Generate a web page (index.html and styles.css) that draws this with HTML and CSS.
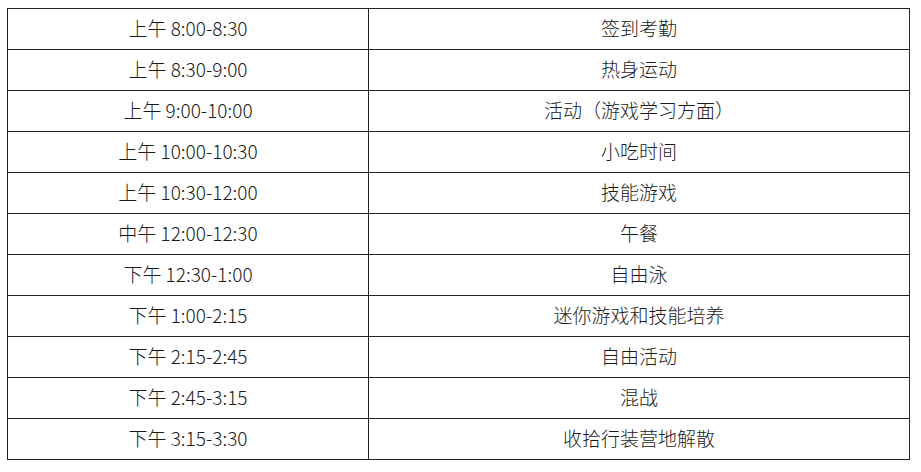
FILE: index.html
```html
<!DOCTYPE html>
<html lang="zh-CN">
<head>
<meta charset="utf-8">
<title>日程表</title>
<link rel="stylesheet" href="styles.css">
</head>
<body>
<table class="schedule">
  <tbody>
    <tr><td class="time">上午 8:00-8:30</td><td class="activity">签到考勤</td></tr>
    <tr><td class="time">上午 8:30-9:00</td><td class="activity">热身运动</td></tr>
    <tr><td class="time">上午 9:00-10:00</td><td class="activity">活动（游戏学习方面）</td></tr>
    <tr><td class="time">上午 10:00-10:30</td><td class="activity">小吃时间</td></tr>
    <tr><td class="time">上午 10:30-12:00</td><td class="activity">技能游戏</td></tr>
    <tr><td class="time">中午 12:00-12:30</td><td class="activity">午餐</td></tr>
    <tr><td class="time">下午 12:30-1:00</td><td class="activity">自由泳</td></tr>
    <tr><td class="time">下午 1:00-2:15</td><td class="activity">迷你游戏和技能培养</td></tr>
    <tr><td class="time">下午 2:15-2:45</td><td class="activity">自由活动</td></tr>
    <tr><td class="time">下午 2:45-3:15</td><td class="activity">混战</td></tr>
    <tr><td class="time">下午 3:15-3:30</td><td class="activity">收拾行装营地解散</td></tr>
  </tbody>
</table>
</body>
</html>
```

FILE: styles.css
```css
html, body {
  margin: 0;
  padding: 0;
  background: #ffffff;
}

body {
  padding: 8px 0 0 7px;
  font-family: "Noto Sans CJK SC", "Noto Sans", sans-serif;
  color: #1a1a1a;
}

.schedule {
  border-collapse: collapse;
  width: 903px;
  table-layout: fixed;
}

.schedule td {
  border: 1px solid #222222;
  height: 37px;
  padding: 0 0 3px;
  text-align: center;
  vertical-align: middle;
  font-size: 19px;
  font-weight: 300;
  line-height: 20px;
}

.schedule td.time {
  width: 360px;
}
```
